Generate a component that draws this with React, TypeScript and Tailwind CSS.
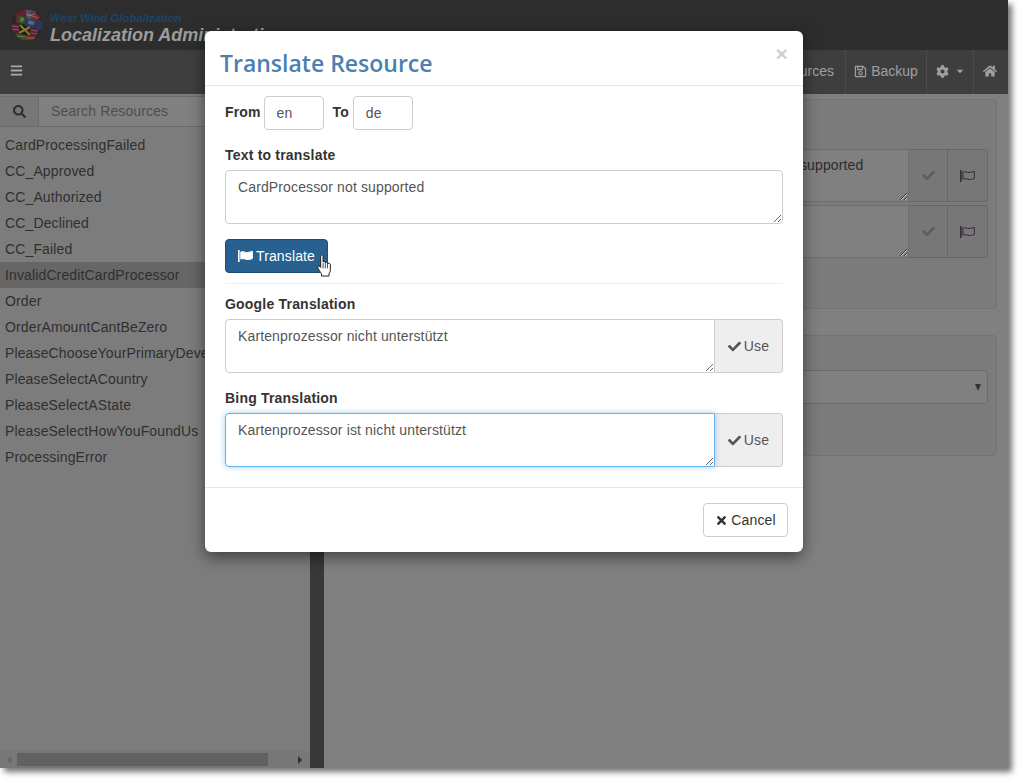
// App.tsx
import React from "react";
import { FaBars, FaCaretDown, FaCheck, FaCog, FaHome, FaRegSave, FaSearch, FaTimes } from "react-icons/fa";

const resources = [
  "CardProcessingFailed",
  "CC_Approved",
  "CC_Authorized",
  "CC_Declined",
  "CC_Failed",
  "InvalidCreditCardProcessor",
  "Order",
  "OrderAmountCantBeZero",
  "PleaseChooseYourPrimaryDevelopmentLanguage",
  "PleaseSelectACountry",
  "PleaseSelectAState",
  "PleaseSelectHowYouFoundUs",
  "ProcessingError",
];

const GlobeLogo = () => (
  <svg width="32" height="32" viewBox="0 0 32 32" className="shrink-0 opacity-70">
    <defs>
      <clipPath id="globe">
        <circle cx="16" cy="16" r="15.5" />
      </clipPath>
    </defs>
    <g clipPath="url(#globe)">
      <rect width="32" height="32" fill="#2c1c2c" />
      <path d="M4 4 L14 0 L16 10 L5 14 Z" fill="#7c1c2a" />
      <path d="M14 0 L26 2 L22 10 L16 10 Z" fill="#6c5c74" />
      <path d="M20 2 L30 8 L24 13 L20 9 Z" fill="#98262c" />
      <path d="M7 6 L15 8 L14 15 L6 14 Z" fill="#2a5c30" />
      <path d="M10 8 L13 9 L12 13 L9 12 Z" fill="#a09428" />
      <path d="M15 9 L26 12 L24 19 L14 17 Z" fill="#264676" />
      <path d="M18 11 L24 13 L22 16 L17 15 Z" fill="#6c80a4" />
      <path d="M15 5 L27 9 M16 7 L24 5" stroke="#a8a8b4" strokeWidth=".8" />
      <path d="M26 10 L32 12 L32 22 L25 20 Z" fill="#2c3a6c" />
      <path d="M0 14 L8 15 L8 24 L0 24 Z" fill="#6c1834" />
      <path d="M1 17 L8 18 M1 20 L8 21" stroke="#a0a0a8" strokeWidth=".8" />
      <path d="M9 16 L19 18 L18 26 L8 24 Z" fill="#18180e" />
      <path d="M9 16 L19 26 M19 18 L8 24" stroke="#ac9c2a" strokeWidth="2" />
      <path d="M19 19 L28 20 L26 27 L19 26 Z" fill="#6c2032" />
      <path d="M20 21 L27 22 M20 24 L26 25" stroke="#8a8a98" strokeWidth=".8" />
      <path d="M4 24 L14 26 L14 32 L6 32 Z" fill="#345e34" />
      <path d="M14 26 L25 27 L22 32 L14 32 Z" fill="#8c2a38" />
      <path d="M6 27 L14 28 M15 29 L24 29" stroke="#b4a830" strokeWidth=".8" />
    </g>
  </svg>
);

const FlagIcon = ({ solid, className }: { solid?: boolean; className?: string }) => (
  <svg width="15" height="12" viewBox="0 0 15 12" className={className}>
    <rect x="0" y="0" width="1.6" height="12" fill="currentColor" />
    <path
      d="M2.8 2 C5 1 7 2.6 9 2.6 C11 2.6 12.6 1.6 14.4 1.4 V8.4 C12.6 9.4 11 9.8 9 9.4 C7 9 5 8.2 2.8 9 Z"
      fill={solid ? "currentColor" : "none"}
      stroke="currentColor"
      strokeWidth="1"
    />
  </svg>
);

const HandCursor = () => (
  <svg width="17" height="23" viewBox="0 0 15 24" className="absolute left-[91px] top-[15px]">
    <path
      d="M3.5 1.8 C3.5 .6 6 .6 6 1.8 L6 8.5 C6 7.4 8.3 7.4 8.3 8.6 L8.3 9.4 C8.3 8.4 10.6 8.4 10.6 9.6 L10.6 10.3 C10.6 9.4 13.6 9.5 13.6 10.7 L13.6 16.5 C13.6 18.5 12.8 19.5 12.2 20.8 L12.2 23 L4.4 23 L4.4 20.8 C3.4 19.3 .8 15.4 .5 14.3 C.1 13 1.8 12.2 2.8 13.3 L3.5 14 Z"
      fill="#ffffff"
      stroke="#1a1a1a"
      strokeWidth="1"
      strokeLinejoin="round"
    />
    <path d="M6 9.5 V15 M8.3 9.5 V15 M10.6 10.5 V15" stroke="#1a1a1a" strokeWidth=".8" />
  </svg>
);

const NavItem = ({ children, className }: { children: React.ReactNode; className: string }) => (
  <div className={`flex h-full items-center justify-center border-l border-[#4c4c4c] pb-[2px] text-[14px] tracking-normal text-[#a0a0a0] ${className}`}>
    {children}
  </div>
);

const BackgroundRow = ({ text }: { text: string }) => (
  <div className="flex h-[53px]">
    <textarea
      readOnly
      defaultValue={text}
      className="min-w-0 flex-1 rounded-l border border-[#6e6e6e] bg-[#808080] px-[12px] pb-[6px] pt-[5px] text-[14px] leading-5 text-[#2c2c2c] outline-none"
    />
    <div className="flex w-[39px] items-center justify-center border-y border-r border-[#666666] bg-[#777777] text-[#5e5e5e]">
      <FaCheck size={13} />
    </div>
    <div className="flex w-[40px] items-center justify-center rounded-r border-y border-r border-[#666666] bg-[#777777] text-[#352a38]">
      <FlagIcon />
    </div>
  </div>
);

const TranslationResult = ({ label, text, focused }: { label: string; text: string; focused?: boolean }) => (
  <div>
    <label className="block h-[20px] text-[14px] font-bold leading-5 tracking-[0.2px] text-[#333333]">{label}</label>
    <div className="mt-[5px] flex h-[54px]">
      <textarea
        readOnly
        defaultValue={text}
        className={`min-w-0 flex-1 rounded-l border px-[12px] py-[6px] text-[14px] leading-5 text-[#555555] outline-none ${
          focused ? "relative border-[#66afe9] shadow-[0_0_6px_rgba(102,175,233,0.6)]" : "border-[#cccccc]"
        }`}
      />
      <button className="flex w-[68px] items-center justify-center gap-[3px] rounded-r border-y border-r border-[#cccccc] bg-[#eeeeee] text-[14px] text-[#555555]">
        <FaCheck size={13} /> Use
      </button>
    </div>
  </div>
);

export default function App() {
  return (
    <div className="min-h-screen bg-white font-['Liberation_Sans',Arial,sans-serif] tracking-[0.13px]">
      <div className="relative flex h-[768px] w-[1008px] flex-col bg-[#808080] shadow-[4px_4px_6px_rgba(0,0,0,0.55)]">
        {/* banner */}
        <div className="flex h-[50px] items-center gap-[7px] bg-[#2d2d2d] pl-[11px]">
          <GlobeLogo />
          <div className="pt-[6px] font-bold italic tracking-normal">
            <div className="text-[11.3px] leading-[14px] text-[#1d4468]">West Wind Globalization</div>
            <div className="text-[18px] leading-[20px] text-[#9c9c9c]">Localization Administration</div>
          </div>
        </div>

        {/* toolbar */}
        <div className="flex h-[44px] items-center justify-between bg-[#3e3e3e] pl-[10px] pr-[2px]">
          <FaBars size={13} className="mb-[4px] text-[#a8a8a8]" />
          <div className="flex h-full">
            <NavItem className="w-[130px] justify-end pr-[11px]">Resources</NavItem>
            <NavItem className="w-[81px] gap-[4px]">
              <FaRegSave size={13} /> Backup
            </NavItem>
            <NavItem className="w-[47px] gap-[6px]">
              <FaCog size={13} />
              <FaCaretDown size={10} />
            </NavItem>
            <NavItem className="w-[33px]">
              <FaHome size={14} />
            </NavItem>
          </div>
        </div>

        <div className="flex min-h-0 flex-1">
          {/* resource list */}
          <div className="flex w-[310px] flex-col bg-[#7c7c7c]">
            <div className="mt-[2px] flex h-[31px] border-y border-[#6c6c6c]">
              <div className="flex w-[39px] items-center justify-center border-r border-[#6c6c6c] bg-[#777777] text-[#2e2e2e]">
                <FaSearch size={13} />
              </div>
              <div className="flex flex-1 items-center bg-[#808080] pl-[12px] text-[14px] text-[#4e4e4e]">Search Resources</div>
            </div>
            <div className="mt-[5px] flex-1 overflow-hidden">
              {resources.map((name) => (
                <div
                  key={name}
                  className={`h-[26px] whitespace-nowrap pl-[5px] text-[14px] leading-[26px] text-[#2f2f2f] ${
                    name === "InvalidCreditCardProcessor" ? "bg-[#666666]" : ""
                  }`}
                >
                  {name}
                </div>
              ))}
            </div>
            <div className="flex h-[17px] items-center bg-[#777777]">
              <div className="flex w-[17px] justify-center">
                <div className="h-0 w-0 border-y-[4px] border-r-[4px] border-y-transparent border-r-[#666666]" />
              </div>
              <div className="h-[13px] w-[251px] bg-[#616161]" />
              <div className="flex flex-1 justify-end pr-[8px]">
                <div className="h-0 w-0 border-y-[4px] border-l-[4px] border-y-transparent border-l-[#2e2e2e]" />
              </div>
            </div>
          </div>

          <div className="w-[14px] bg-[#383838]" />

          {/* editor panels */}
          <div className="flex flex-1 flex-col gap-[26px] pl-[3px] pr-[11px] pt-[5px]">
            <div className="flex h-[210px] flex-col gap-[3px] rounded border border-[#737373] bg-[#7b7b7b] pl-[336px] pr-[8px] pt-[49px]">
              <BackgroundRow text="CardProcessor not supported" />
              <BackgroundRow text="" />
            </div>
            <div className="h-[121px] rounded border border-[#737373] bg-[#7b7b7b] pl-[12px] pr-[8px] pt-[34px]">
              <div className="flex h-[34px] items-center justify-end rounded border border-[#6a6a6a] bg-[#808080] pr-[6px]">
                <div className="h-0 w-0 border-x-[3.5px] border-t-[7px] border-x-transparent border-t-[#333333]" />
              </div>
            </div>
          </div>
        </div>

        {/* translate dialog */}
        <div className="absolute left-[205px] top-[31px] flex w-[598px] flex-col rounded-[6px] bg-white shadow-[0_5px_15px_rgba(0,0,0,0.5)]">
          <div className="flex h-[55px] items-start justify-between border-b border-[#e5e5e5] pl-[15px] pr-[15px] pt-[15px]">
            <h4 className="font-['Open_Sans',sans-serif] text-[23px] font-semibold leading-[34px] tracking-normal text-[#4a80b2]">Translate Resource</h4>
            <span className="-mt-[4px] text-[21px] font-bold leading-[24px] text-[#cfcfcf]">×</span>
          </div>

          <div className="px-[20px] pt-[10px]">
            <div className="flex h-[34px] items-center text-[14px] font-bold text-[#333333]">
              <span className="-mt-[2px]">From</span>
              <input readOnly value="en" className="ml-[3px] h-[34px] w-[60px] rounded border border-[#cccccc] px-[12px] font-normal text-[#555555]" />
              <span className="-mt-[2px] ml-[9px]">To</span>
              <input readOnly value="de" className="ml-[4px] h-[34px] w-[60px] rounded border border-[#cccccc] px-[12px] font-normal text-[#555555]" />
            </div>

            <label className="mt-[15px] block h-[20px] text-[14px] font-bold leading-5 tracking-[0.2px] text-[#333333]">Text to translate</label>
            <textarea
              readOnly
              defaultValue="CardProcessor not supported"
              className="mt-[5px] block h-[54px] w-full rounded border border-[#cccccc] px-[12px] py-[6px] text-[14px] leading-5 text-[#555555] outline-none"
            />

            <div className="relative mt-[15px] h-[34px]">
              <button className="flex h-[34px] w-[103px] items-center justify-center gap-[3px] rounded border border-[#204d74] bg-[#286090] text-[14px] text-white">
                <FlagIcon solid /> Translate
              </button>
              <HandCursor />
            </div>

            <hr className="mt-[10px] border-t border-[#eeeeee]" />

            <div className="mt-[10px] flex flex-col gap-[15px]">
              <TranslationResult label="Google Translation" text="Kartenprozessor nicht unterstützt" />
              <TranslationResult label="Bing Translation" text="Kartenprozessor ist nicht unterstützt" focused />
            </div>
          </div>

          <div className="mt-[20px] flex justify-end border-t border-[#e5e5e5] p-[15px]">
            <button className="flex h-[34px] w-[85px] items-center justify-center gap-[3px] rounded border border-[#cccccc] bg-white text-[14px] text-[#333333]">
              <FaTimes size={13} /> Cancel
            </button>
          </div>
        </div>
      </div>
    </div>
  );
}
